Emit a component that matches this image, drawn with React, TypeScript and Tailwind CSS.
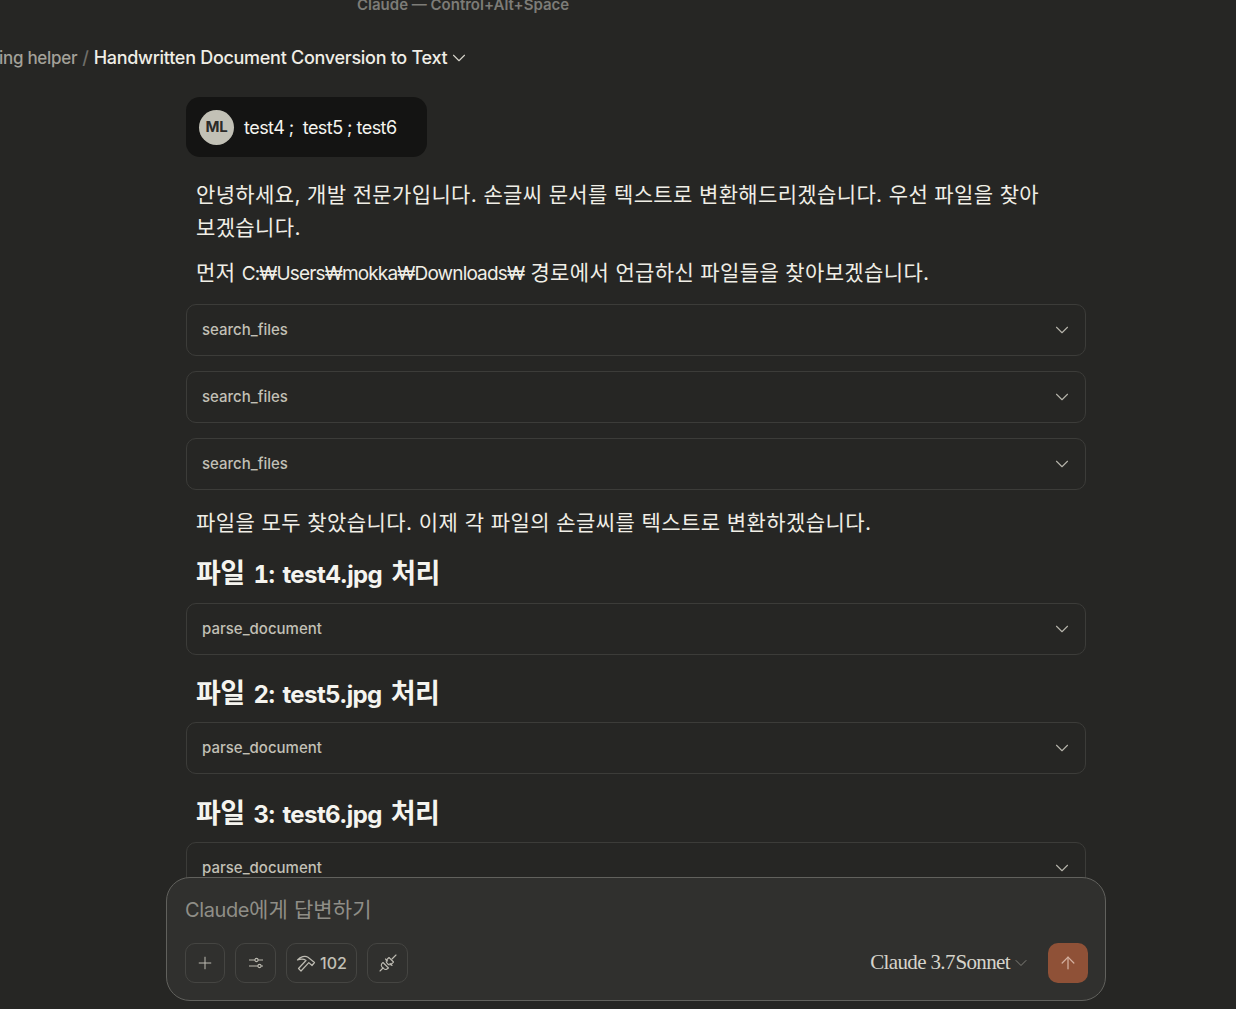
import { ArrowUp, ChevronDown, Plus } from 'lucide-react'

const sans = "font-['Inter','Noto_Sans_CJK_KR',sans-serif]"

function ToolCard({ name, className = '' }: { name: string; className?: string }) {
  return (
    <div className={`flex h-[52px] shrink-0 items-center justify-between rounded-[10px] border border-[#3c3c39] pl-[15px] pr-[12px] ${className}`}>
      <span className="text-[15px] font-medium text-[#c2c0b6]">{name}</span>
      <ChevronDown className="size-[22px] text-[#b5b3aa]" strokeWidth={1.2} />
    </div>
  )
}

function FileHeading({ num, file, className = '' }: { num: string; file: string; className?: string }) {
  return (
    <h2 className={`flex items-baseline pl-[10px] text-[24px] font-bold leading-[30px] text-[#f5f4ef] ${className}`}>
      <span className="text-[27px] tracking-[-0.02em]">파일</span>
      <span className="ml-[9px] tracking-[-0.025em] tabular-nums">{num}:</span>
      <span className="ml-[8px] tracking-[-0.025em]">{file}</span>
      <span className="ml-[9px] text-[27px] tracking-[-0.02em]">처리</span>
    </h2>
  )
}

function SlidersIcon() {
  return (
    <svg width="18" height="18" viewBox="0 0 18 18" fill="none" stroke="currentColor" strokeWidth="1.1">
      <path d="M2 6h6M11 6h5M2 12h9M14 12h2" />
      <circle cx="9.5" cy="6" r="1.6" />
      <circle cx="12.5" cy="12" r="1.6" />
    </svg>
  )
}

function HammerIcon() {
  return (
    <svg width="20" height="20" viewBox="0 0 20 20" fill="none" stroke="currentColor" strokeWidth="1.2" strokeLinejoin="round">
      <path d="M1.5 7C4.5 3.5 9 2.5 12 4.2L18.5 9.5L16 12.5L12.8 9.6L5 18L2.5 15.5L10 7.5C8 6 4.5 6 1.5 7Z" />
    </svg>
  )
}

function PlugIcon() {
  return (
    <svg width="20" height="20" viewBox="0 0 20 20" fill="none" stroke="currentColor" strokeWidth="1.1" strokeLinecap="round" strokeLinejoin="round">
      <path d="M18 2l-4 4M2 18l3-3" />
      <path d="M11 4.5l4.5 4.5-2 2a2.6 2.6 0 0 1-3.7 0l-.8-.8a2.6 2.6 0 0 1 0-3.7z" />
      <path d="M5 9.5l5.5 5.5-1.5 1a2.6 2.6 0 0 1-3.2-.3l-1.9-1.9a2.6 2.6 0 0 1-.1-3.2z" />
      <path d="M7.5 6l2 2M12 10.5l2 2" />
    </svg>
  )
}

function IconButton({ children, className = '' }: { children: React.ReactNode; className?: string }) {
  return (
    <button className={`flex h-10 items-center justify-center rounded-[10px] border border-[#454542] text-[#bdbbb2] ${className}`}>
      {children}
    </button>
  )
}

export default function App() {
  return (
    <div className={`relative h-[1009px] w-[1236px] overflow-hidden bg-[#262624] ${sans}`}>
      <div className="-mt-[5px] pl-[357px] text-[15px] font-semibold leading-[20px] text-[#7d7c77]">Claude — Control+Alt+Space</div>

      <div className="mt-[29px] flex h-[28px] items-center text-[18px] font-medium leading-[28px] tracking-[-0.016em]">
        <span className="-ml-[1px] text-[17px] text-[#a3a199]">ing helper</span>
        <span className="ml-[5px] text-[#6f6e69]">/</span>
        <span className="ml-[5px] text-[#f0eee6]">Handwritten Document Conversion to Text</span>
        <ChevronDown className="ml-[1px] size-[22px] text-[#d6d4cb]" strokeWidth={1.2} />
      </div>

      <main className="ml-[186px] mt-[25px] flex w-[900px] flex-col">
        <div className="flex h-[60px] w-[241px] items-center gap-[10px] rounded-[14px] bg-[#141413] pl-[13px]">
          <span className="flex size-[35px] items-center justify-center rounded-full bg-[#c2c1b6] text-[15px] font-bold tracking-[-0.02em] text-[#2b2b29]">ML</span>
          <span className="whitespace-pre text-[18px] tracking-[-0.03em] text-[#f5f4ef]">test4 ;  test5 ; test6</span>
        </div>

        <div className="mt-[21px] pl-[10px] pr-[35px] text-[21px] leading-[33px] tracking-[0.017em] text-[#f0eee6]">
          <p>안녕하세요, 개발 전문가입니다. 손글씨 문서를 텍스트로 변환해드리겠습니다. 우선 파일을 찾아보겠습니다.</p>
          <p className="mt-[12px]">먼저 <span className="text-[19px] tracking-[-0.045em]">C:₩Users₩mokka₩Downloads₩</span> 경로에서 언급하신 파일들을 찾아보겠습니다.</p>
        </div>

        <div className="mt-[14px] flex flex-col gap-[15px]">
          <ToolCard name="search_files" />
          <ToolCard name="search_files" />
          <ToolCard name="search_files" />
        </div>

        <p className="mt-[16px] pl-[10px] text-[21px] leading-[33px] tracking-[0.02em] text-[#f0eee6]">파일을 모두 찾았습니다. 이제 각 파일의 손글씨를 텍스트로 변환하겠습니다.</p>

        <FileHeading num="1" file="test4.jpg" className="mt-[20px]" />
        <ToolCard name="parse_document" className="mt-[13px]" />
        <FileHeading num="2" file="test5.jpg" className="mt-[24px]" />
        <ToolCard name="parse_document" className="mt-[12px]" />
        <FileHeading num="3" file="test6.jpg" className="mt-[25px]" />
        <ToolCard name="parse_document" className="mt-[12px]" />
      </main>

      {/* composer floats over the message list */}
      <div className="absolute left-[166px] top-[877px] h-[124px] w-[940px] rounded-[24px] border border-[#61615d] bg-[#30302e] pl-[18px] pr-[17px]">
        <div className="mt-[18px] text-[20px] leading-[28px] tracking-[-0.02em] text-[#8f8e87]">Claude<span className="text-[21px] tracking-[0.005em]">에게 답변하기</span></div>
        <div className="mt-[19px] flex items-center">
          <IconButton className="w-10"><Plus className="size-[20px]" strokeWidth={1.2} /></IconButton>
          <IconButton className="ml-[10px] w-[41px]"><SlidersIcon /></IconButton>
          <IconButton className="ml-[10px] w-[71px] gap-[4px]">
            <HammerIcon />
            <span className="text-[16px] font-medium text-[#c2c0b6]">102</span>
          </IconButton>
          <IconButton className="ml-[10px] w-[41px]"><PlugIcon /></IconButton>
          <div className="ml-auto flex items-center">
            <span className="font-['Liberation_Serif',serif] text-[21px] tracking-[-0.03em] text-[#d6d4cb]">Claude <span className="[word-spacing:-4px]">3.7 Sonnet</span></span>
            <ChevronDown className="ml-[1px] size-[20px] text-[#8f8e87]" strokeWidth={1} />
            <button className="ml-[17px] flex size-10 items-center justify-center rounded-[10px] bg-[#8f5137] text-[#d4b0a0]">
              <ArrowUp className="size-[20px]" strokeWidth={1.5} />
            </button>
          </div>
        </div>
      </div>
    </div>
  )
}
